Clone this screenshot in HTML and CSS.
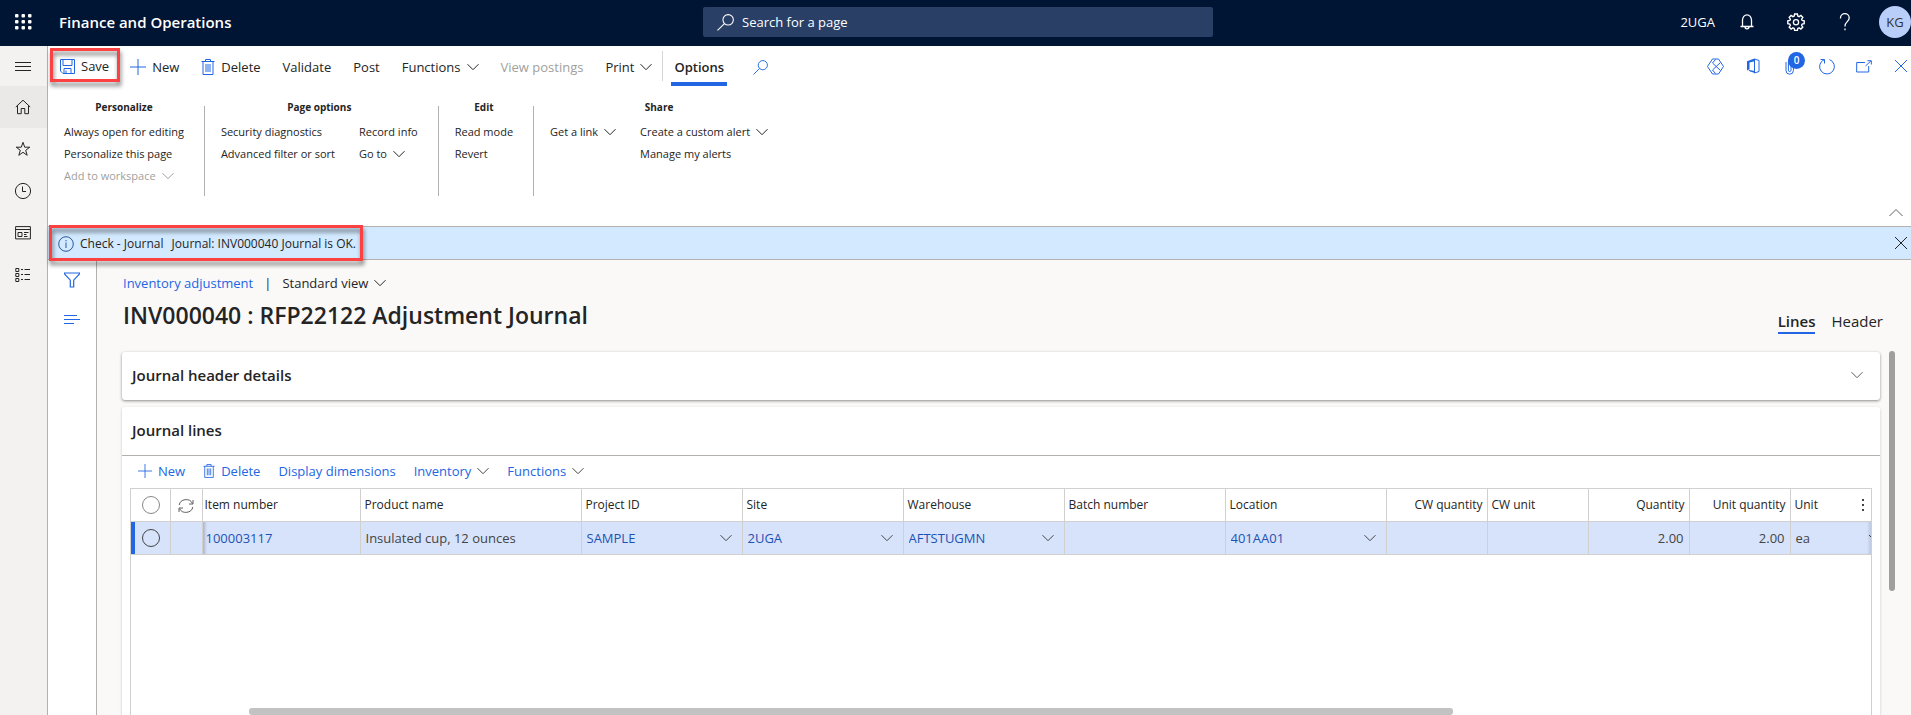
FILE: index.html
```html
<!DOCTYPE html>
<html lang="en">
<head>
<meta charset="utf-8">
<title>Finance and Operations</title>
<link rel="stylesheet" href="styles.css">
</head>
<body>
<svg class="sprite" aria-hidden="true">
  <symbol id="chev" viewBox="0 0 12 12"><path d="M.5 3.2 6 8.7l5.500-5.500"/></symbol>
  <symbol id="chev-up" viewBox="0 0 14 14"><path d="M.5 10 7 3.500l6.500 6.500"/></symbol>
  <symbol id="plus" viewBox="0 0 16 16"><path d="M8 0v16M0 8h16"/></symbol>
  <symbol id="trash" viewBox="0 0 14 16"><path d="M.5 2.500h13M4.500 2.500V.5h5v2M2 2.500v13h10v-13M5 5v8M7 5v8M9 5v8"/></symbol>
  <symbol id="lens" viewBox="0 0 16 16"><circle cx="10.500" cy="5.500" r="4.900"/><path d="M7 9 .5 15.500"/></symbol>
  <symbol id="cross" viewBox="0 0 14 14"><path d="M1 1l12 12M13 1 1 13"/></symbol>
</svg>

<header class="topbar">
  <button class="waffle" aria-label="App launcher">
    <svg width="17" height="16" viewBox="0 0 17 16"><g fill="#fff"><rect width="3.500" height="3.500" rx="1"/><rect x="6.500" width="3.500" height="3.500" rx="1"/><rect x="13" width="3.500" height="3.500" rx="1"/><rect y="6" width="3.500" height="3.500" rx="1"/><rect x="6.500" y="6" width="3.500" height="3.500" rx="1"/><rect x="13" y="6" width="3.500" height="3.500" rx="1"/><rect y="12" width="3.500" height="3.500" rx="1"/><rect x="6.500" y="12" width="3.500" height="3.500" rx="1"/><rect x="13" y="12" width="3.500" height="3.500" rx="1"/></g></svg>
  </button>
  <div class="brand">Finance and Operations</div>
  <label class="search">
    <svg class="ico" width="17" height="17"><use href="#lens"/></svg>
    <input type="text" placeholder="Search for a page" aria-label="Search for a page">
  </label>
  <div class="top-actions">
    <span class="company">2UGA</span>
    <button aria-label="Notifications"><svg class="ico" width="14" height="16" viewBox="0 0 14 16"><path d="M.5 12.500h13M2.500 12.500V6a4.500 5.200 0 0 1 9 0v6.500M5 12.800a2 2 0 0 0 4 0" stroke-width="1.300"/></svg></button>
    <button aria-label="Settings"><svg class="ico" width="18" height="18" viewBox="0 0 18 18"><path d="M7.600 1h2.800l.4 2.100 1.300.6 1.800-1.200 1.900 1.900-1.200 1.800.6 1.300 2 .4v2.700l-2 .4-.6 1.300 1.200 1.800-1.900 1.900-1.800-1.200-1.300.6-.4 2H7.600l-.4-2-1.300-.6-1.800 1.200-1.900-1.900 1.200-1.800-.6-1.300-2-.4V7.900l2-.4.600-1.300-1.200-1.800 1.900-1.900 1.800 1.200 1.300-.6z" stroke-width="1.400"/><circle cx="9" cy="9.200" r="2.600" stroke-width="1.300"/></svg></button>
    <button aria-label="Help"><svg class="ico" width="12" height="18" viewBox="0 0 12 18"><path d="M1.500 5.500V5a4.300 4.300 0 0 1 8.700 0c0 3.500-4.200 3.800-4.200 8v.5M6 15.600v1.700" stroke-width="1.300"/></svg></button>
    <button class="avatar">KG</button>
  </div>
</header>

<div class="shell">
  <nav class="rail" aria-label="Navigation">
    <button class="menu" aria-label="Expand"><svg class="ico" width="16" height="12" viewBox="0 0 16 12"><path d="M0 1.500h16M0 5.500h16M0 9.500h16"/></svg></button>
    <button class="on" aria-label="Home"><svg class="ico" width="16" height="16" viewBox="0 0 16 16"><path d="M.8 8 8 1.200 15.200 8M2.500 6.500v8.200h3.700V9.500h3.600v5.200h3.700V6.500"/></svg></button>
    <button aria-label="Favorites"><svg class="ico" width="16" height="16" viewBox="0 0 16 16"><path d="M8 1.300l1.700 4.900h5.100l-4.100 3.100 1.500 5L8 11.300l-4.200 3 1.500-5-4.100-3.100h5.100z"/></svg></button>
    <button aria-label="Recent"><svg class="ico" width="18" height="18" viewBox="0 0 18 18"><circle cx="9" cy="9" r="7.600"/><path d="M8.500 4.500v5H12"/></svg></button>
    <button aria-label="Workspaces"><svg class="ico" width="16" height="14" viewBox="0 0 16 14"><path d="M.6.6h14.800v12.300H.6zM.6 3.500h14.800M3 6.500h4v4H3zM9 6.500h4.500M9 8.500h2.500M9 10.500h3.500"/></svg></button>
    <button aria-label="Modules"><svg class="ico" width="16" height="16" viewBox="0 0 16 16"><path d="M.8 1.500h3v3h-3zM.8 6.500h3v3h-3zM.8 11.500h3v3h-3zM6 2.500h2M9.500 2.500H15M6 7.500h2M9.500 7.500H15M6 12.500h2M9.500 12.500H15"/></svg></button>
  </nav>

  <div class="work">
    <div class="actionbar">
      <button class="act save marked"><svg class="ico blue" width="15" height="15" viewBox="0 0 15 15"><path d="M.5.5h14v14H3L.5 12zM3 .5v6h9v-6M4 14.500V9.500h7v5M6 11.500v3"/></svg>Save</button>
      <button class="act new"><svg class="ico blue" width="16" height="16"><use href="#plus"/></svg>New</button>
      <button class="act del"><svg class="ico blue" width="14" height="16"><use href="#trash"/></svg>Delete</button>
      <button class="act">Validate</button>
      <button class="act">Post</button>
      <button class="act">Functions<svg class="ico" width="12" height="12"><use href="#chev"/></svg></button>
      <button class="act off" disabled>View postings</button>
      <button class="act">Print<svg class="ico" width="12" height="12"><use href="#chev"/></svg></button>
      <span class="vline"></span>
      <button class="act tab">Options</button>
      <button class="act" aria-label="Find action"><svg class="ico blue" width="15" height="15"><use href="#lens"/></svg></button>
      <div class="tools">
        <button aria-label="Power Apps"><svg class="ico blue" width="17" height="17" viewBox="0 0 17 17"><path d="M5.500 1h6L16.500 8.500l-5 7.500h-6L.5 8.500zM8.500 1.500l-3 3.500 8 7.500M8.500 15.500l-3-3.500 8-7.500"/></svg></button>
        <button aria-label="Open in Office"><svg class="ico blue" width="14" height="16" viewBox="0 0 14 16"><path d="M8.500 1 13 2.500v11L8.500 15zM8 13.500l-5-1"/><path class="solid" d="M8.500.5v2.800L3.500 4.600v6.700L1 12.500V3.300z"/><path class="solid" d="M2 12.500 8.500 13v2z"/></svg></button>
        <button class="attach" aria-label="Attachments"><svg class="ico blue" width="10" height="17" viewBox="0 0 10 17"><path d="M1 4v8.500a3.700 3.700 0 0 0 7.400 0V3.500a2.500 2.500 0 0 0-5 0v8.700a1.300 1.300 0 0 0 2.600 0V4"/></svg><span class="badge">0</span></button>
        <button aria-label="Refresh"><svg class="ico blue" width="18" height="17" viewBox="0 0 18 17"><path d="M11.500 1.600A7.400 7.400 0 1 1 6 1.800M2.500 1.500h4v4"/></svg></button>
        <button aria-label="Open in new window"><svg class="ico blue" width="16" height="13" viewBox="0 0 16 13"><path d="M9 2.500H.7v9.500h12V6M9.500 6l5.300-5M11.500.7h3.800v3.800"/></svg></button>
        <button aria-label="Close page"><svg class="ico blue" width="14" height="14"><use href="#cross"/></svg></button>
      </div>
    </div>

    <div class="ribbon">
      <section class="group">
        <h2>Personalize</h2>
        <div class="cols"><div class="col">
          <button>Always open for editing</button>
          <button>Personalize this page</button>
          <button class="off" disabled>Add to workspace<svg class="ico" width="12" height="12"><use href="#chev"/></svg></button>
        </div></div>
      </section>
      <section class="group">
        <h2>Page options</h2>
        <div class="cols">
          <div class="col"><button>Security diagnostics</button><button>Advanced filter or sort</button></div>
          <div class="col"><button>Record info</button><button>Go to<svg class="ico" width="12" height="12"><use href="#chev"/></svg></button></div>
        </div>
      </section>
      <section class="group">
        <h2>Edit</h2>
        <div class="cols"><div class="col"><button>Read mode</button><button>Revert</button></div></div>
      </section>
      <section class="group">
        <h2>Share</h2>
        <div class="cols">
          <div class="col"><button>Get a link<svg class="ico" width="12" height="12"><use href="#chev"/></svg></button></div>
          <div class="col"><button>Create a custom alert<svg class="ico" width="12" height="12"><use href="#chev"/></svg></button><button>Manage my alerts</button></div>
        </div>
      </section>
      <button class="collapse" aria-label="Collapse"><svg class="ico" width="14" height="14"><use href="#chev-up"/></svg></button>
    </div>

    <div class="message">
      <div class="notice marked" role="status">
        <svg class="ico" width="16" height="16" viewBox="0 0 16 16"><circle cx="8" cy="8" r="7.300"/><path d="M8 6.500V12M8 4v1.300"/></svg>
        <span>Check - Journal</span><span>Journal: INV000040 Journal is OK.</span>
      </div>
      <button class="dismiss" aria-label="Dismiss"><svg class="ico" width="14" height="14"><use href="#cross"/></svg></button>
    </div>

    <div class="page">
      <aside class="side">
        <button aria-label="Show filters"><svg class="ico blue" width="16" height="16" viewBox="0 0 16 16"><path d="M.5 1h15v1L9.700 8.200v6.800H6.300V8.200L.5 2z" stroke-width="1.200"/></svg></button>
        <button aria-label="Show list"><svg class="ico blue" width="16" height="12" viewBox="0 0 16 12"><path d="M0 1.500h13M0 5.500h16M0 9.500h10" stroke-width="1.200"/></svg></button>
      </aside>

      <main class="main">
        <div class="crumbs"><a href="#">Inventory adjustment</a><span class="bar">|</span><button>Standard view<svg class="ico" width="12" height="12"><use href="#chev"/></svg></button></div>
        <div class="heading">
          <h1>INV000040 : RFP22122 Adjustment Journal</h1>
          <div class="tabs"><button class="sel">Lines</button><button>Header</button></div>
        </div>

        <div class="scroll">
          <div class="cards">
            <section class="card">
              <h3>Journal header details</h3>
              <button aria-label="Expand"><svg class="ico" width="12" height="12"><use href="#chev"/></svg></button>
            </section>
            <section class="card-open">
              <h3>Journal lines</h3>
              <div class="linebar">
                <button class="new"><svg class="ico blue" width="14" height="14"><use href="#plus"/></svg>New</button>
                <button class="del"><svg class="ico blue" width="12" height="14"><use href="#trash"/></svg>Delete</button>
                <button>Display dimensions</button>
                <button>Inventory<svg class="ico" width="12" height="12"><use href="#chev"/></svg></button>
                <button>Functions<svg class="ico" width="12" height="12"><use href="#chev"/></svg></button>
              </div>
              <div class="grid">
                <table>
                  <colgroup><col class="w-pick"><col class="w-sync"><col class="w-item"><col class="w-name"><col class="w-dim"><col class="w-dim"><col class="w-dim"><col class="w-dim"><col class="w-dim"><col class="w-num"><col class="w-num"><col class="w-num"><col class="w-num"><col></colgroup>
                  <thead><tr>
                    <th class="pick"><input type="checkbox" aria-label="Select all"></th>
                    <th class="sync"><svg class="ico" width="16" height="14" viewBox="0 0 16 14"><path d="M1.200 6A7 6.500 0 0 1 14.500 4.500M14.800 8A7 6.500 0 0 1 1.500 9.500M15 1v4h-4M1 13V9h4"/></svg></th>
                    <th class="item">Item number</th><th>Product name</th><th>Project ID</th><th>Site</th><th>Warehouse</th><th>Batch number</th><th>Location</th>
                    <th class="num">CW quantity</th><th>CW unit</th><th class="num">Quantity</th><th class="num">Unit quantity</th>
                    <th><div class="last">Unit<button aria-label="Grid options"><svg width="4" height="14" viewBox="0 0 4 14"><g fill="#444"><rect x="1" y="1" width="2" height="2"/><rect x="1" y="6" width="2" height="2"/><rect x="1" y="11" width="2" height="2"/></g></svg></button></div></th>
                  </tr></thead>
                  <tbody><tr>
                    <td class="pick"><input type="checkbox" aria-label="Select row"></td>
                    <td></td>
                    <td class="item"><a href="#">100003117</a></td>
                    <td>Insulated cup, 12 ounces</td>
                    <td><div class="lookup"><input type="text" value="SAMPLE" aria-label="Project ID"><button aria-label="Open"><svg class="ico" width="12" height="12"><use href="#chev"/></svg></button></div></td>
                    <td><div class="lookup"><input type="text" value="2UGA" aria-label="Site"><button aria-label="Open"><svg class="ico" width="12" height="12"><use href="#chev"/></svg></button></div></td>
                    <td><div class="lookup"><input type="text" value="AFTSTUGMN" aria-label="Warehouse"><button aria-label="Open"><svg class="ico" width="12" height="12"><use href="#chev"/></svg></button></div></td>
                    <td></td>
                    <td><div class="lookup"><input type="text" value="401AA01" aria-label="Location"><button aria-label="Open"><svg class="ico" width="12" height="12"><use href="#chev"/></svg></button></div></td>
                    <td></td><td></td>
                    <td class="num">2.00</td><td class="num">2.00</td>
                    <td class="unit"><div class="last">ea<svg class="ico" width="2" height="12" viewBox="0 0 2 12"><path d="M0 3l2 2"/></svg></div></td>
                  </tr></tbody>
                </table>
                <div class="htrack"><div class="hthumb"></div></div>
              </div>
            </section>
          </div>
          <div class="vthumb"></div>
        </div>
      </main>
    </div>
  </div>
</div>
</body>
</html>
```
FILE: styles.css
```css
* { box-sizing: border-box; }
html, body { height: 100%; }
body {
  margin: 0;
  display: flex;
  flex-direction: column;
  overflow: hidden;
  font-family: "Open Sans", "Noto Sans", sans-serif;
  font-size: 13px;
  line-height: 20px;
  color: #242424;
  background: #fff;
}
button, input {
  font: inherit;
  color: inherit;
  background: none;
  border: 0;
  padding: 0;
  margin: 0;
  outline: 0;
}
button { display: inline-flex; align-items: center; white-space: nowrap; }
a { color: #2266e3; text-decoration: none; }
h1, h2, h3 { margin: 0; font-weight: 600; }
.sprite { position: absolute; width: 0; height: 0; }
.ico { fill: none; stroke: currentColor; stroke-width: 1; flex: none; }
.blue { color: #2266e3; }
.solid { fill: currentColor; stroke: none; }
.off { color: #a19f9d; }

/* Top bar */
.topbar {
  flex: none;
  display: grid;
  grid-template-columns: 1fr 510px 1fr;
  align-items: center;
  height: 46px;
  padding: 0 0 2px 5px;
  background: #001433;
  color: #fff;
}
.waffle { grid-row: 1; grid-column: 1; margin-left: 10px; width: 24px; }
.brand { grid-row: 1; grid-column: 1; margin-left: 54px; font-size: 15px; font-weight: 600; }
.search {
  grid-column: 2;
  display: flex;
  align-items: center;
  gap: 8px;
  height: 30px;
  padding: 0 14px;
  border-radius: 2px;
  background: #293f66;
}
.search input { flex: 1; min-width: 0; }
.search input::placeholder { color: #fff; opacity: 1; }
.top-actions { display: flex; align-items: center; justify-content: flex-end; }
.top-actions button { justify-content: center; width: 49px; }
.company { margin-right: 7px; }
.top-actions .avatar { width: 32px; height: 32px; margin-left: 10px; border-radius: 50%; background: #b9cef8; color: #333; }

/* Navigation rail */
.shell { flex: 1; min-height: 0; display: flex; }
.rail { flex: none; width: 48px; background: #f3f2f1; border-right: 1px solid #b3b0ad; display: flex; flex-direction: column; }
.rail button { height: 42px; justify-content: center; padding-right: 1px; }
.rail .menu { height: 40px; padding-top: 2px; }
.rail .on { background: #ebe9e8; }
.work { flex: 1; min-width: 0; display: flex; flex-direction: column; }

/* Red outline with drop shadow */
.marked { position: relative; }
.marked::after {
  content: "";
  position: absolute;
  inset: 0;
  border: 3px solid #fb4141;
  filter: drop-shadow(1px 4px 2px rgba(0, 0, 0, .5));
  pointer-events: none;
}

/* Action bar */
.actionbar { flex: none; display: flex; height: 44px; padding: 0 0 4px 2px; }
.act { height: 42px; margin-right: 22px; gap: 6px; }
.act.save { height: 34px; margin: 2px 10px 0 0; padding: 2px 11px 0 10px; }
.vline { width: 1px; height: 30px; margin: 5px 8px 0 -12px; background: #d6d6d6; }
.act.tab { height: 40px; margin-right: 26px; padding: 6px 3px 0; font-weight: 600; border-bottom: 4px solid #2266e3; }
.tools { flex: 1; display: flex; justify-content: flex-end; align-items: center; }
.tools button { width: 37px; height: 32px; justify-content: center; }
.tools button:last-child { width: 20px; margin-left: 9px; }
.tools .attach { position: relative; }
.badge {
  position: absolute;
  left: 17px;
  top: 2px;
  width: 17px;
  height: 17px;
  border-radius: 50%;
  background: #2266e3;
  color: #fff;
  font-size: 10px;
  font-weight: 600;
  line-height: 17px;
  text-align: center;
}

/* Ribbon */
.ribbon { flex: none; display: flex; height: 136px; padding-top: 9px; position: relative; font-size: 11px; }
.group { position: relative; padding: 0 21px 0 16px; height: 98px; }
.group:not(:nth-last-child(2))::after { content: ""; position: absolute; right: 0; top: 7px; bottom: 1px; width: 1px; background: #b3b0ad; }
.group h2 { font-size: 10px; font-weight: 700; line-height: 16px; margin-bottom: 6px; text-align: center; }
.cols { display: flex; gap: 24px; }
.col { display: flex; flex-direction: column; align-items: flex-start; }
.col button { height: 22px; gap: 6px; }
.collapse { position: absolute; right: 8px; bottom: 6px; color: #605e5c; }

/* Message bar */
.message { flex: none; display: flex; justify-content: space-between; height: 34px; border: solid #b3b0ad; border-width: 1px 0; background: #d2e9ff; font-size: 12px; }
.notice { display: flex; align-items: center; gap: 8px; height: 36px; margin: -2px 0 0 1px; padding: 2px 7px 0 9px; }
.notice .ico { color: #2b5797; margin-right: -2px; }
.dismiss { margin-right: 3px; }

/* Page */
.page { flex: 1; min-height: 0; display: flex; }
.side { flex: none; width: 49px; border-right: 1px solid #b3b0ad; display: flex; flex-direction: column; }
.side button { height: 40px; justify-content: center; }
.main { flex: 1; min-width: 0; display: flex; flex-direction: column; padding: 13px 16px 0 25px; background: #faf9f8; }
.crumbs { display: flex; margin-left: 1px; }
.crumbs .bar { margin: 0 11px; }
.crumbs button { gap: 6px; }
.heading { display: flex; justify-content: space-between; height: 58px; padding-top: 6px; margin-left: 1px; }
h1 { font-size: 23px; line-height: 32px; }
.tabs { display: flex; gap: 16px; align-items: flex-start; padding: 11px 12px 0 0; font-size: 15px; }
.tabs button { height: 24px; border-bottom: 2px solid transparent; }
.tabs .sel { border-color: #2266e3; font-weight: 600; }
.scroll { flex: 1; min-height: 0; display: flex; gap: 9px; }
.cards { flex: 1; min-width: 0; display: flex; flex-direction: column; gap: 7px; }
.vthumb { flex: none; width: 6px; height: 66%; border-radius: 3px; background: #a09f9d; }
.card { flex: none; display: flex; justify-content: space-between; align-items: center; height: 48px; padding: 0 17px 2px 10px; margin-top: 1px; background: #fff; border-radius: 3px; box-shadow: 0 1px 3px rgba(0, 0, 0, .45); }
.card button { color: #605e5c; }
h3 { font-size: 15px; }
.card-open { flex: 1; min-height: 0; display: flex; flex-direction: column; background: #fff; border-radius: 3px 3px 0 0; box-shadow: 0 1px 3px rgba(0, 0, 0, .2); }
.card-open h3 { line-height: 46px; padding: 0 0 2px 10px; border-bottom: 1px solid #b3b0ad; }
.linebar { display: flex; align-items: center; height: 32px; padding: 0 0 2px 16px; gap: 18px; color: #2266e3; }
.linebar button { gap: 6px; }
.linebar .ico:not(.blue) { color: #444; }

/* Grid */
.grid { flex: 1; min-height: 0; display: flex; flex-direction: column; justify-content: space-between; margin: 0 8px; border: 1px solid #d2d0ce; border-bottom: 0; overflow: hidden; }
table { width: 100%; border-collapse: collapse; table-layout: fixed; }
.w-pick { width: 39px; }
.w-sync { width: 32px; }
.w-item { width: 158px; }
.w-name { width: 221px; }
.w-dim { width: 161px; }
.w-num { width: 101px; }
th, td { padding: 0 4px; text-align: left; border-right: 1px solid #d2d0ce; border-bottom: 1px solid #d2d0ce; white-space: nowrap; overflow: hidden; }
th { height: 32px; padding: 1px 4px 0; font-size: 12px; font-weight: 400; }
th:last-child, td:last-child { border-right: 0; }
td { height: 33px; padding: 0 5px; background: #d7e3fb; color: #444; }
td a, .lookup { color: #1d52b5; }
th.item { padding-left: 2px; }
td.item { padding-left: 3px; box-shadow: inset 4px 0 3px -2px rgba(0, 0, 0, .2); }
.num { text-align: right; }
th.sync { text-align: center; color: #605e5c; }
th.sync svg, .pick input { vertical-align: middle; }
.pick { text-align: center; }
th.pick, td.pick { padding: 0 3px 1px 5px; }
td.pick { box-shadow: inset 4px 0 #2266e3; }
.pick input { appearance: none; width: 18px; height: 18px; border: 1px solid #8a8886; border-radius: 50%; }
td.pick input { border-color: #444; }
.last, .lookup { display: flex; justify-content: space-between; align-items: center; }
th .last { padding-right: 2px; }
.lookup input { width: 80%; min-width: 0; }
.lookup button { color: #444; padding-right: 5px; }
td.unit { padding-right: 0; box-shadow: inset -3px 0 3px -1px rgba(0, 0, 0, .12); }
.htrack { height: 7px; padding: 0 24% 0 118px; }
.hthumb { height: 7px; border-radius: 3px; background: #c2c2c2; }
```
